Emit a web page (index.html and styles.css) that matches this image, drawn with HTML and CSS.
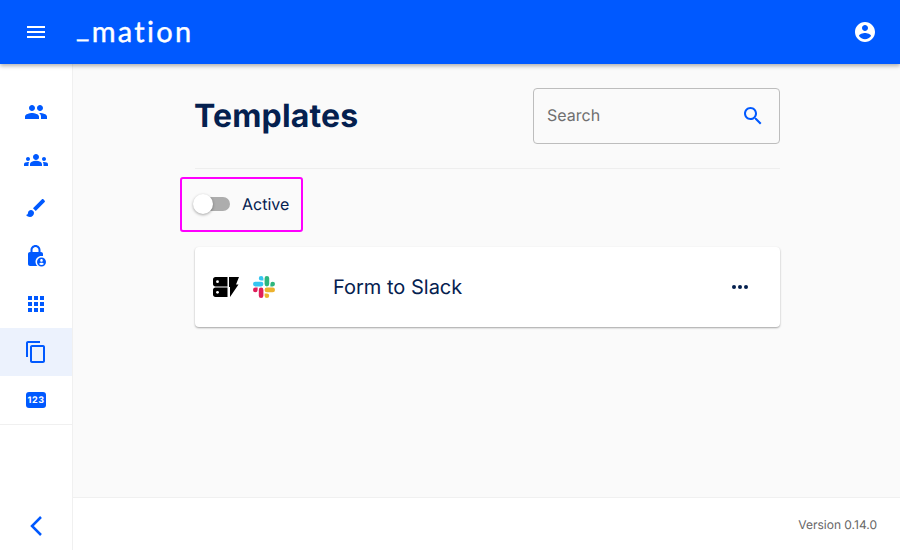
FILE: index.html
```html
<!DOCTYPE html>
<html lang="en">
<head>
<meta charset="utf-8">
<title>Templates</title>
<link rel="stylesheet" href="styles.css">
</head>
<body>
<header class="topbar">
  <svg class="ico-white" viewBox="0 0 24 24"><path d="M3 18h18v-2H3v2zm0-5h18v-2H3v2zm0-7v2h18V6H3z"/></svg>
  <span class="logo"><span class="logo-bar">_</span>mation</span>
  <svg class="ico-white account" viewBox="0 0 24 24"><path d="M12 2C6.48 2 2 6.48 2 12s4.48 10 10 10 10-4.48 10-10S17.52 2 12 2zm0 3c1.66 0 3 1.34 3 3s-1.34 3-3 3-3-1.34-3-3 1.34-3 3-3zm0 14.2c-2.5 0-4.71-1.28-6-3.22.03-1.99 4-3.08 6-3.08 1.99 0 5.97 1.09 6 3.08-1.29 1.94-3.5 3.22-6 3.22z"/></svg>
</header>
<div class="shell">
  <nav class="sidebar">
    <ul class="nav-list">
      <li class="nav-item"><svg class="ico" viewBox="0 0 24 24"><path d="M16 11c1.66 0 2.99-1.34 2.99-3S17.66 5 16 5c-1.66 0-3 1.34-3 3s1.34 3 3 3zm-8 0c1.66 0 2.99-1.34 2.99-3S9.66 5 8 5C6.34 5 5 6.34 5 8s1.34 3 3 3zm0 2c-2.33 0-7 1.17-7 3.5V19h14v-2.5c0-2.33-4.67-3.5-7-3.5zm8 0c-.29 0-.62.02-.97.05 1.16.84 1.97 1.97 1.97 3.45V19h6v-2.5c0-2.33-4.67-3.5-7-3.5z"/></svg></li>
      <li class="nav-item"><svg class="ico" viewBox="0 0 24 24"><path d="M12 12.75c1.63 0 3.07.39 4.24.9 1.08.48 1.76 1.56 1.76 2.73V18H6v-1.61c0-1.18.68-2.26 1.76-2.73 1.17-.52 2.61-.91 4.24-.91zM4 13c1.1 0 2-.9 2-2s-.9-2-2-2-2 .9-2 2 .9 2 2 2zm1.13 1.1C4.76 14.04 4.39 14 4 14c-.99 0-1.93.21-2.78.58C.48 14.9 0 15.62 0 16.43V18h4.5v-1.61c0-.83.23-1.61.63-2.29zM20 13c1.1 0 2-.9 2-2s-.9-2-2-2-2 .9-2 2 .9 2 2 2zm4 3.43c0-.81-.48-1.53-1.22-1.85-.85-.37-1.79-.58-2.78-.58-.39 0-.76.04-1.13.1.4.68.63 1.46.63 2.29V18H24v-1.57zM12 6c1.66 0 3 1.34 3 3s-1.34 3-3 3-3-1.34-3-3 1.34-3 3-3z"/></svg></li>
      <li class="nav-item"><svg class="ico" viewBox="0 0 24 24"><path d="M7 14c-1.66 0-3 1.34-3 3 0 1.31-1.16 2-2 2 .92 1.22 2.49 2 4 2 2.21 0 4-1.79 4-4 0-1.66-1.34-3-3-3zm13.71-9.37l-1.34-1.34c-.39-.39-1.02-.39-1.41 0L9 12.25 11.75 15l8.96-8.96c.39-.39.39-1.02 0-1.41z"/></svg></li>
      <li class="nav-item"><svg class="ico" viewBox="0 0 24 24"><path d="M17 8h-.5V6c0-2.76-2.24-5-5-5s-5 2.24-5 5v2H6c-1.1 0-2 .9-2 2v10c0 1.1.9 2 2 2h7.500c-1.200-1-2-2.600-2-4.300 0-3.200 2.600-5.800 5.800-5.800.6 0 1.200.1 1.700.2V10c0-1.100-.9-2-2-2zM8.500 6c0-1.660 1.340-3 3-3s3 1.340 3 3v2h-6V6z"/><path d="M17.500 13.500c-2.500 0-4.500 2-4.500 4.500s2 4.500 4.500 4.500 4.500-2 4.500-4.500-2-4.500-4.500-4.500zm0 1.600c.8 0 1.300.6 1.300 1.300s-.5 1.300-1.300 1.300-1.300-.6-1.300-1.300.5-1.300 1.300-1.300zm0 5.900c-1 0-1.800-.4-2.400-1.100.3-.7 1.500-1.100 2.400-1.100s2.100.4 2.400 1.100c-.6.7-1.400 1.100-2.400 1.100z"/></svg></li>
      <li class="nav-item"><svg class="ico" viewBox="0 0 24 24"><path d="M4 8h4V4H4v4zm6 12h4v-4h-4v4zm-6 0h4v-4H4v4zm0-6h4v-4H4v4zm6 0h4v-4h-4v4zm6-10v4h4V4h-4zm-6 4h4V4h-4v4zm6 6h4v-4h-4v4zm0 6h4v-4h-4v4z"/></svg></li>
      <li class="nav-item selected"><svg class="ico" viewBox="0 0 24 24"><path d="M16 1H4c-1.1 0-2 .9-2 2v14h2V3h12V1zm3 4H8c-1.1 0-2 .9-2 2v14c0 1.1.9 2 2 2h11c1.1 0 2-.9 2-2V7c0-1.1-.9-2-2-2zm0 16H8V7h11v14z"/></svg></li>
      <li class="nav-item"><span class="badge">123</span></li>
    </ul>
    <div class="collapse"><svg class="chevron" viewBox="0 0 24 24"><path d="M17 3 8 12l9 9"/></svg></div>
  </nav>
  <div class="column">
    <main class="main">
      <div class="head">
        <h1 class="title">Templates</h1>
        <div class="search">
          <span class="search-label">Search</span>
          <svg class="ico" viewBox="0 0 24 24"><path d="M15.5 14h-.79l-.28-.27C15.41 12.59 16 11.11 16 9.5 16 5.91 13.09 3 9.5 3S3 5.91 3 9.5 5.91 16 9.5 16c1.61 0 3.09-.59 4.23-1.57l.27.28v.79l5 4.99L20.49 19l-4.99-5zm-6 0C7.01 14 5 11.99 5 9.5S7.01 5 9.5 5 14 7.01 14 9.5 11.99 14 9.5 14z"/></svg>
        </div>
      </div>
      <div class="filter">
        <span class="switch"><span class="thumb"></span></span>
        <span class="filter-label">Active</span>
      </div>
      <article class="card">
        <div class="card-icons">
          <svg class="app-icon" viewBox="0 0 26 20"><path d="M2.500 0H14.500V9.500H2.500C1 9.500 0 8.500 0 7V2.500C0 1 1 0 2.500 0ZM2.500 10.500H14.500V20H2.500C1 20 0 19 0 17.500V13C0 11.500 1 10.500 2.500 10.500Z"/><path d="M16 0H26L23 7.500H25.500L17 20V10H16Z"/><circle class="hole" cx="4.500" cy="4.700" r="1.400"/><circle class="hole" cx="4.500" cy="15.300" r="1.400"/></svg>
          <svg class="slack" viewBox="0 0 24 24">
            <path fill="#E01E5A" d="M5.042 15.165a2.528 2.528 0 0 1-2.52 2.523A2.528 2.528 0 0 1 0 15.165a2.527 2.527 0 0 1 2.522-2.52h2.52v2.52zM6.313 15.165a2.527 2.527 0 0 1 2.521-2.52 2.527 2.527 0 0 1 2.521 2.52v6.313A2.528 2.528 0 0 1 8.834 24a2.528 2.528 0 0 1-2.521-2.522v-6.313z"/>
            <path fill="#36C5F0" d="M8.834 5.042a2.528 2.528 0 0 1-2.521-2.52A2.528 2.528 0 0 1 8.834 0a2.528 2.528 0 0 1 2.521 2.522v2.52H8.834zM8.834 6.313a2.528 2.528 0 0 1 2.521 2.521 2.528 2.528 0 0 1-2.521 2.521H2.522A2.528 2.528 0 0 1 0 8.834a2.528 2.528 0 0 1 2.522-2.521h6.312z"/>
            <path fill="#2EB67D" d="M18.956 8.834a2.528 2.528 0 0 1 2.522-2.521A2.528 2.528 0 0 1 24 8.834a2.528 2.528 0 0 1-2.522 2.521h-2.522V8.834zM17.688 8.834a2.528 2.528 0 0 1-2.523 2.521 2.527 2.527 0 0 1-2.52-2.521V2.522A2.527 2.527 0 0 1 15.165 0a2.528 2.528 0 0 1 2.523 2.522v6.312z"/>
            <path fill="#ECB22E" d="M15.165 18.956a2.528 2.528 0 0 1 2.523 2.522A2.528 2.528 0 0 1 15.165 24a2.527 2.527 0 0 1-2.52-2.522v-2.522h2.52zM15.165 17.688a2.527 2.527 0 0 1-2.52-2.523 2.526 2.526 0 0 1 2.52-2.52h6.313A2.527 2.527 0 0 1 24 15.165a2.528 2.528 0 0 1-2.522 2.523h-6.313z"/>
          </svg>
        </div>
        <span class="card-title">Form to Slack</span>
        <svg class="more" viewBox="0 0 24 24"><circle cx="6" cy="12" r="2"/><circle cx="12" cy="12" r="2"/><circle cx="18" cy="12" r="2"/></svg>
      </article>
    </main>
    <footer class="footer">Version 0.14.0</footer>
  </div>
</div>
</body>
</html>
```
FILE: styles.css
```css
* { box-sizing: border-box; }
html, body { height: 100%; }
body {
  margin: 0;
  display: flex;
  flex-direction: column;
  overflow: hidden;
  font-family: Inter, "Liberation Sans", sans-serif;
  text-rendering: geometricPrecision;
  color: #04204f;
  background: #fafafa;
}
.topbar {
  flex: 0 0 64px;
  display: flex;
  align-items: center;
  padding: 0 24px;
  background: #0059ff;
  box-shadow: 0 2px 4px rgba(0, 0, 0, .3);
  position: relative;
  z-index: 2;
}
.ico-white { width: 24px; height: 24px; fill: #fff; flex: none; }
.logo {
  margin: 0 0 6px 28px;
  color: #fff;
  font-family: Lato, sans-serif;
  font-size: 29px;
  font-weight: 400;
  line-height: 30px;
  letter-spacing: 2.300px;
  -webkit-text-stroke: .4px #fff;
}
.logo-bar { vertical-align: 5px; }
.account { margin-left: auto; margin-right: -1px; }
.shell { flex: 1; display: flex; min-height: 0; }
.sidebar {
  flex: 0 0 73px;
  display: flex;
  flex-direction: column;
  padding-top: 24px;
  background: #fff;
  border-right: 1px solid #f0f0f0;
}
.nav-list {
  list-style: none;
  margin: 0;
  padding: 0;
  border-bottom: 1px solid #f0f0f0;
}
.nav-item {
  height: 48px;
  display: flex;
  align-items: center;
  justify-content: center;
}
.nav-item.selected { background: #ecf2fd; }
.ico { width: 24px; height: 24px; fill: #0059ff; flex: none; }
.badge {
  width: 20px;
  height: 16px;
  display: flex;
  align-items: center;
  justify-content: center;
  border-radius: 3px;
  background: #0059ff;
  color: #fff;
  font-size: 9px;
  font-weight: 700;
  letter-spacing: .6px;
}
.collapse {
  margin-top: auto;
  height: 53px;
  padding-top: 4px;
  display: flex;
  align-items: center;
  justify-content: center;
}
.chevron {
  width: 24px;
  height: 24px;
  fill: none;
  stroke: #0059ff;
  stroke-width: 2.500;
}
.column { flex: 1; display: flex; flex-direction: column; min-width: 0; }
.main { flex: 1; padding: 24px 120px 0 122px; }
.head {
  height: 81px;
  display: flex;
  justify-content: space-between;
  align-items: flex-start;
  border-bottom: 1px solid #eee;
}
.title {
  margin: 0 0 0 -1px;
  font-size: 32px;
  font-weight: 700;
  line-height: 56px;
  letter-spacing: .15px;
  color: #04204f;
}
.search {
  width: 247px;
  height: 56px;
  display: flex;
  align-items: center;
  justify-content: space-between;
  padding: 0 14px 2px 13px;
  border: 1px solid #bdbdbd;
  border-radius: 4px;
}
.search-label { font-size: 16px; color: #6f6f6f; }
.search .ico { margin-top: 2px; }
.filter {
  width: 123px;
  height: 55px;
  margin: 8px 0 15px -15px;
  display: flex;
  align-items: center;
  padding: 0 0 1px 12px;
  border: 2px solid #f0f;
  border-radius: 3px;
}
.switch {
  position: relative;
  width: 34px;
  height: 14px;
  margin-left: 2px;
  border-radius: 7px;
  background: #adadad;
}
.thumb {
  position: absolute;
  left: -3px;
  top: -3px;
  width: 20px;
  height: 20px;
  border-radius: 50%;
  background: #fff;
  box-shadow: 0 1px 3px rgba(0, 0, 0, .35);
}
.filter-label { margin-left: 12px; font-size: 16px; color: #04204f; }
.card {
  height: 80px;
  display: flex;
  align-items: center;
  padding: 0 28px 0 18px;
  background: #fff;
  border-radius: 4px;
  box-shadow: 0 1px 2px rgba(0, 0, 0, .35);
}
.card-icons { width: 120px; display: flex; align-items: center; gap: 14px; }
.app-icon { width: 26px; height: 20px; fill: #000; flex: none; }
.hole { fill: #fff; }
.slack { width: 22px; height: 22px; flex: none; }
.card-title { font-size: 20px; font-weight: 400; color: #04204f; }
.more { margin-left: auto; width: 24px; height: 24px; fill: #04204f; }
.footer {
  height: 53px;
  display: flex;
  align-items: center;
  justify-content: flex-end;
  padding: 0 23px;
  background: #fff;
  border-top: 1px solid #f0f0f0;
  font-size: 12px;
  color: #666;
}
```
